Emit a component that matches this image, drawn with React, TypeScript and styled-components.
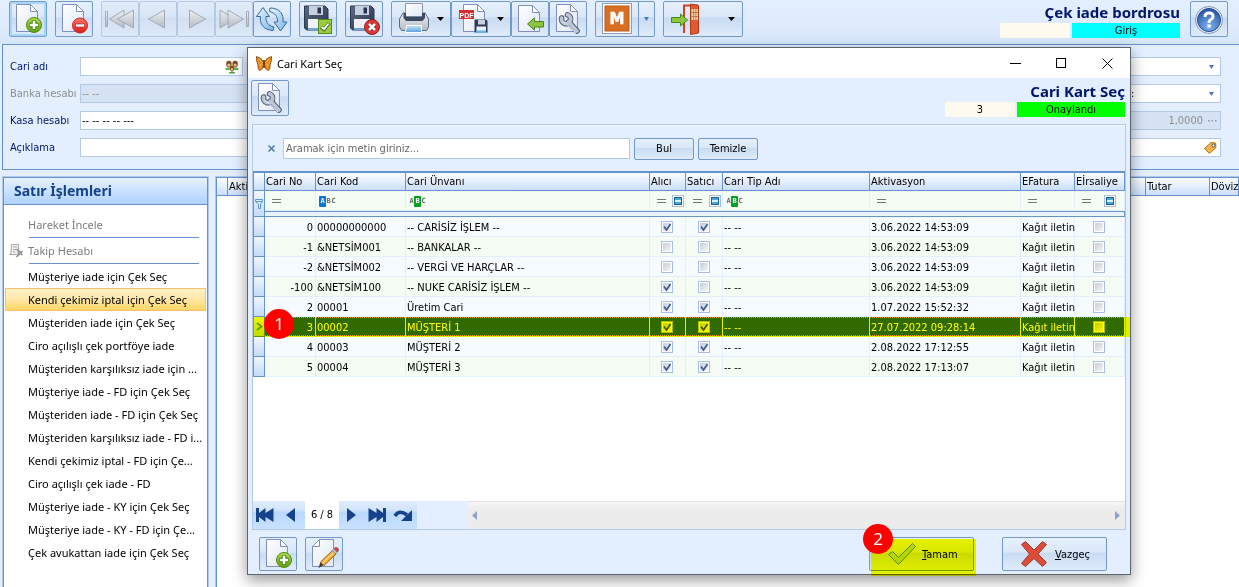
import React from "react";
import styled, { createGlobalStyle, css } from "styled-components";

const TAHOMA = `Tahoma, "DejaVu Sans Condensed", "DejaVu Sans", sans-serif`;
const SEGOE = `"Segoe UI", "Noto Sans", "Open Sans", sans-serif`;

const c = {
  bg: "#e3efff",
  line: "#6593cf",
  soft: "#b4c9e5",
  navy: "#00156e",
  cellLine: "#e3efff",
};

const Global = createGlobalStyle`
  *, *::before, *::after { box-sizing: border-box; }
  body { margin: 0; background: ${c.bg}; font-family: ${TAHOMA}; font-size: 11px; color: #000; overflow: hidden; }
  button, input, select { font: inherit; color: inherit; }
  svg { display: block; flex: none; }
`;

/* ---------- shell ---------- */

const Page = styled.div`
  position: relative;
  display: flex;
  flex-direction: column;
  height: 100vh;
  background: ${c.bg};
`;

const Toolbar = styled.header`
  display: flex;
  align-items: flex-start;
  gap: 8px;
  height: 44px;
  padding: 1px 11px 0 9px;
  background: linear-gradient(#e3efff, #deebfc 60%, #d6e6fa);
`;

const Group = styled.div`
  display: flex;
`;

const gloss = css`
  background: linear-gradient(#e6f0fc, #d9e7f7 45%, #c8dbf2 46%, #dfebfa);
`;

const ToolButton = styled.button<{ $w?: number; $h?: number; $active?: boolean; $dim?: boolean }>`
  display: flex;
  align-items: center;
  justify-content: space-between;
  width: ${(p) => p.$w ?? 38}px;
  height: ${(p) => p.$h ?? 36}px;
  padding: 0;
  border: 1px solid ${(p) => (p.$active ? "#6fa3d6" : p.$dim ? "#b5c9e4" : "#7399c9")};
  border-radius: 2px;
  overflow: hidden;
  ${gloss}
  ${(p) => p.$active && "box-shadow: inset 0 0 0 2px #a9d6f7;"}
  ${(p) => p.$dim && "background: linear-gradient(#e1ecfa, #d8e5f5 45%, #d0dff1 46%, #dde9f8);"}
`;

const SplitEnd = styled.span`
  display: flex;
  align-items: center;
  justify-content: center;
  align-self: stretch;
  width: 16px;
  border-left: 1px solid #7399c9;
`;

const CaretBox = styled.span`
  display: flex;
  justify-content: center;
  width: 21px;
`;

const FieldCaret = styled.span`
  display: flex;
  justify-content: center;
  width: 11px;
`;

const TitleBlock = styled.div<{ $end?: number }>`
  display: flex;
  flex-direction: column;
  align-items: flex-end;
  margin-left: auto;
  padding-right: ${(p) => p.$end ?? 0}px;
`;

const BigTitle = styled.h1`
  margin: 0;
  height: 22px;
  font: 700 15px/22px "Noto Sans", sans-serif;
  color: ${c.navy};
  white-space: nowrap;
`;

const StatusRow = styled.div`
  display: flex;
  gap: 2px;
`;

const Status = styled.span<{ $bg: string; $w: number }>`
  width: ${(p) => p.$w}px;
  height: 15px;
  line-height: 15px;
  text-align: center;
  background: ${(p) => p.$bg};
`;

/* ---------- form ---------- */

const FormPanel = styled.section`
  display: flex;
  justify-content: space-between;
  margin-left: 2px;
  padding: 12px 18px 12px 7px;
  border: solid ${c.line};
  border-width: 1px 0 1px 1px;
`;

const FieldCol = styled.div`
  display: grid;
  grid-template-columns: minmax(0, 1fr);
  gap: 8px;
  width: 300px;
`;

const RightCol = styled(FieldCol)`
  width: 92px;
`;

const FieldRow = styled.div`
  display: flex;
  align-items: center;
  height: 19px;
`;

const Label = styled.label<{ $muted?: boolean }>`
  width: 70px;
  flex: none;
  color: ${(p) => (p.$muted ? "#8d8d8d" : c.navy)};
  white-space: nowrap;
`;

const Field = styled.div<{ $w?: number; $muted?: boolean }>`
  display: flex;
  align-items: center;
  gap: 4px;
  flex: ${(p) => (p.$w ? "none" : 1)};
  width: ${(p) => (p.$w ? p.$w + "px" : "auto")};
  min-width: 0;
  height: 19px;
  padding: 0 3px 0 1px;
  border: 1px solid ${c.soft};
  background: ${(p) => (p.$muted ? "#d6e3f4" : "#fff")};
  color: ${(p) => (p.$muted ? "#8d8d8d" : "#000")};
`;

const FieldInput = styled.input<{ $right?: boolean }>`
  flex: 1;
  min-width: 0;
  padding: 0;
  border: 0;
  outline: 0;
  background: transparent;
  text-align: ${(p) => (p.$right ? "right" : "left")};
  &::placeholder { color: #666; opacity: 1; }
`;

/* ---------- lower area ---------- */

const Lower = styled.div`
  display: flex;
  gap: 8px;
  flex: 1;
  min-height: 0;
  padding: 7px 0 0 3px;
`;

const Sidebar = styled.nav`
  width: 205px;
  flex: none;
  background: #fff;
  border: solid ${c.line};
  border-width: 1px 1px 0;
  box-shadow: 0 0 0 1px ${c.soft};
  font-family: ${SEGOE};
`;

const SideTitle = styled.h2`
  margin: 0;
  height: 27px;
  padding-left: 10px;
  border-bottom: 1px solid ${c.line};
  background: linear-gradient(#e6f1ff, #afd2ff);
  font-size: 14px;
  line-height: 26px;
  color: #15428b;
`;

const SideList = styled.ul`
  margin: 0;
  padding: 8px 1px 0;
  list-style: none;
`;

const SideItem = styled.li<{ $line?: boolean }>`
  ${(p) =>
    p.$line &&
    css`
      padding-bottom: 1px;
      margin-bottom: 1px;
      background: linear-gradient(${c.line}, ${c.line}) 24px 100% / 170px 1px no-repeat;
      & > a { margin-bottom: 1px; }
    `}
`;

const SideLink = styled.a<{ $on?: boolean; $muted?: boolean }>`
  display: flex;
  align-items: center;
  height: 23px;
  border: 1px solid ${(p) => (p.$on ? "#ffbd69" : "transparent")};
  background: ${(p) => (p.$on ? "linear-gradient(#fff2c8, #ffe9ab 45%, #ffd767)" : "none")};
  color: ${(p) => (p.$muted ? "#7d7d7d" : "#000")};
  text-decoration: none;
  white-space: nowrap;
`;

const SideIcon = styled.span`
  display: flex;
  justify-content: flex-start;
  padding-left: 3px;
  width: 22px;
  flex: none;
`;

const Sheet = styled.main`
  flex: 1;
  background: #fff;
  border: solid ${c.line};
  border-width: 1px 0 0 1px;
  box-shadow: 0 0 0 1px ${c.soft};
`;

const headGradient = "linear-gradient(#f9fcff, #e4eefc 50%, #cadefa)";

const SheetTable = styled.table`
  width: 100%;
  table-layout: fixed;
  border-collapse: separate;
  border-spacing: 0;
  th {
    height: 18px;
    padding: 0 0 0 1px;
    border: solid ${c.line};
    border-width: 0 1px 1px 0;
    background: ${headGradient};
    font-weight: 400;
    text-align: left;
    white-space: nowrap;
    overflow: hidden;
  }
`;

/* ---------- dialog ---------- */

const Dialog = styled.section`
  position: absolute;
  top: 47px;
  right: 108px;
  bottom: 12px;
  left: 247px;
  display: flex;
  flex-direction: column;
  border: 1px solid #5c6470;
  background: ${c.bg};
  box-shadow: 0 5px 14px rgba(0, 0, 0, 0.42);
`;

const TitleBar = styled.div`
  display: flex;
  align-items: center;
  flex: none;
  height: 30px;
  padding-left: 8px;
  gap: 5px;
  background: #fff;
  font: 11px ${SEGOE};
`;

const WindowButtons = styled.div`
  display: flex;
  margin-left: auto;
`;

const WindowButton = styled.button`
  display: flex;
  align-items: center;
  justify-content: center;
  width: 46px;
  height: 30px;
  padding: 0;
  border: 0;
  background: none;
`;

const DialogTop = styled.div`
  display: flex;
  flex: none;
  height: 46px;
  padding: 2px 5px 0 3px;
`;

const Pane = styled.div`
  display: flex;
  flex-direction: column;
  flex: 1;
  min-height: 0;
  margin: 0 4px;
  border: 1px solid ${c.soft};
`;

const SearchRow = styled.div`
  display: flex;
  align-items: center;
  flex: none;
  gap: 4px;
  height: 46px;
  padding-left: 13px;
  border-top: 1px solid #f4f9ff;
`;

const ClearButton = styled.button`
  display: flex;
  justify-content: center;
  width: 13px;
  padding: 0 2px 0 0;
  border: 0;
  background: none;
`;

const SearchInput = styled(FieldInput)`
  flex: 0 1 347px;
  height: 21px;
  padding: 0 2px;
  border: 1px solid ${c.soft};
  background: #fff;
`;

const TextButton = styled.button`
  width: 60px;
  height: 22px;
  padding: 0;
  border: 1px solid #7399c9;
  border-radius: 2px;
  ${gloss}
`;

const Grid = styled.table`
  width: 100%;
  table-layout: fixed;
  border-collapse: separate;
  border-spacing: 0;
  border-top: 2px solid ${c.line};
  border-left: 1px solid ${c.line};
`;

const HeadCell = styled.th`
  height: 18px;
  padding: 0 0 0 1px;
  border: solid ${c.line};
  border-width: 0 1px 1px 0;
  background: ${headGradient};
  font-weight: 400;
  text-align: left;
  white-space: nowrap;
`;

const Cell = styled.td<{ $align?: string }>`
  height: 20px;
  padding: 1px ${(p) => (p.$align ? 2 : 0)}px 0 1px;
  border: solid ${c.cellLine};
  border-width: 0 1px 1px 0;
  text-align: ${(p) => p.$align ?? "left"};
  white-space: nowrap;
`;

const MarkCell = styled.td`
  padding: 0;
  border: solid ${c.line};
  border-width: 0 1px 1px 0;
  background: linear-gradient(#f0f6ff, #c4dbfb);
  svg { margin: 0 auto; }
`;

const FilterRow = styled.tr`
  background: #f5fcf4;
`;

const FilterBox = styled.div<{ $start?: number; $end?: number }>`
  display: flex;
  align-items: center;
  justify-content: space-between;
  height: 18px;
  padding: 0 ${(p) => p.$end ?? 1}px 0 ${(p) => p.$start ?? 6}px;
`;

const SpacerCell = styled.td`
  height: 6px;
  padding: 0;
  border: solid ${c.line};
  border-width: 1px 1px 1px 0;
  background: #eaf3ff;
`;

const Row = styled.tr<{ $even?: boolean; $selected?: boolean }>`
  background: ${(p) => (p.$even ? "#f5fcf4" : "#f6fbff")};
  ${(p) =>
    p.$selected &&
    css`
      position: relative;
      color: #fff;
      ${Cell} {
        background:
          repeating-linear-gradient(90deg, #e8a03c 0 1px, #316ac5 1px 2px) 0 0 / 100% 1px no-repeat,
          repeating-linear-gradient(90deg, #e8a03c 0 1px, #316ac5 1px 2px) 0 100% / 100% 1px no-repeat,
          #316ac5;
      }
      ${MarkCell}::after {
        content: "";
        position: absolute;
        inset: 0 -5px 0 0;
        z-index: 1;
        background: #ff0;
        mix-blend-mode: multiply;
        pointer-events: none;
      }
    `}
`;

const CheckWrap = styled.span`
  display: grid;
  grid-template-columns: 12px;
  justify-content: center;
  height: 12px;
  padding-right: 2px;
  & > * { grid-area: 1 / 1; }
  & > svg { pointer-events: none; }
`;

const CheckInput = styled.input`
  appearance: none;
  width: 12px;
  height: 12px;
  margin: 0;
  padding: 1px;
  border: 1px solid #a9bfe0;
  background: linear-gradient(135deg, #c5cbd6, #f6f7f9) content-box, #fff;
`;

const AbcTag = styled.span`
  display: flex;
  font: 700 7px/11px "DejaVu Sans Mono", monospace;
  color: #777;
`;

const AbcLetter = styled.span<{ $bg?: string }>`
  width: ${(p) => (p.$bg ? 7 : 5)}px;
  height: 11px;
  text-align: center;
  color: ${(p) => (p.$bg ? "#fff" : "#666")};
  background: ${(p) => p.$bg ?? "none"};
  border-radius: 1px;
`;

const Blank = styled.div`
  flex: 1;
  background: #fff;
`;

const Navigator = styled.div`
  display: flex;
  flex: none;
  height: 28px;
`;

const NavButton = styled.button`
  display: flex;
  align-items: center;
  justify-content: center;
  width: 26px;
  padding: 0 2px 0 0;
  border: 0;
  background: linear-gradient(#dfecfd, #d0e3fc 37%, #b9d7fe 38%, #c9e1ff);
`;

const NavCount = styled.span`
  width: 34px;
  line-height: 28px;
  text-align: center;
  background: #fff;
`;

const Scroll = styled.div`
  display: flex;
  align-items: center;
  justify-content: space-between;
  flex: 1;
  margin-left: 50px;
  padding: 0 5px;
  border-top: 1px solid #e3e3e3;
  background: linear-gradient(#f5f5f5, #ececec 30%);
`;

const Footer = styled.footer`
  display: flex;
  flex: none;
  gap: 8px;
  height: 44px;
  padding: 7px 23px 0 11px;
`;

const Actions = styled.div`
  display: flex;
  gap: 28px;
  margin-left: auto;
`;

const ActionButton = styled.button`
  display: flex;
  align-items: center;
  gap: 5px;
  width: 105px;
  height: 34px;
  padding: 0 0 0 17px;
  border: 1px solid #7399c9;
  border-radius: 2px;
  ${gloss}
`;

const Marked = styled.div`
  position: relative;
  &::after {
    content: "";
    position: absolute;
    inset: 2px -2px -2px 2px;
    background: #ff0;
    mix-blend-mode: multiply;
    pointer-events: none;
  }
`;

const Step = styled.span<{ $x: number; $y: number }>`
  position: absolute;
  left: ${(p) => p.$x}px;
  top: ${(p) => p.$y}px;
  z-index: 2;
  width: 30px;
  height: 30px;
  border-radius: 50%;
  background: #f00;
  color: #fff;
  font: 17px/29px ${SEGOE};
  text-align: center;
`;

/* ---------- icons ---------- */

const Svg = ({ w = 36, h = 34, children }: { w?: number; h?: number; children: React.ReactNode }) => (
  <svg width={w} height={h} viewBox={`0 0 ${w} ${h}`} fill="none" aria-hidden="true">
    {children}
  </svg>
);

const DefsSvg = styled.svg`
  position: absolute;
`;

const Defs = () => (
  <DefsSvg width="0" height="0" aria-hidden="true">
    <defs>
      <linearGradient id="paper" x1="0" y1="0" x2="1" y2="1">
        <stop offset="0" stopColor="#ffffff" /><stop offset="1" stopColor="#dfe6f5" />
      </linearGradient>
      <linearGradient id="green" x1="0" y1="0" x2="0" y2="1">
        <stop offset="0" stopColor="#b5e04e" /><stop offset="1" stopColor="#5fa010" />
      </linearGradient>
      <linearGradient id="red" x1="0" y1="0" x2="0" y2="1">
        <stop offset="0" stopColor="#ff7a70" /><stop offset="1" stopColor="#d81c1c" />
      </linearGradient>
      <linearGradient id="sky" x1="0" y1="0" x2="0" y2="1">
        <stop offset="0" stopColor="#c5e6fa" /><stop offset="1" stopColor="#5b9fd8" />
      </linearGradient>
      <linearGradient id="ice" x1="0" y1="0" x2="1" y2="1">
        <stop offset="0" stopColor="#e6f5fe" /><stop offset="1" stopColor="#7db6e4" />
      </linearGradient>
      <linearGradient id="dark" x1="0" y1="0" x2="1" y2="1">
        <stop offset="0" stopColor="#5d6b80" /><stop offset="1" stopColor="#27344c" />
      </linearGradient>
      <linearGradient id="grey" x1="0" y1="0" x2="0" y2="1">
        <stop offset="0" stopColor="#eef0f3" /><stop offset="1" stopColor="#b4bac4" />
      </linearGradient>
      <radialGradient id="help" cx=".5" cy=".8" r=".8">
        <stop offset="0" stopColor="#7fb4ec" /><stop offset="1" stopColor="#2453a5" />
      </radialGradient>
    </defs>
  </DefsSvg>
);

const Paper = () => (
  <>
    <path d="M6.500 2.500H20.500L27.500 9.500V29.500H6.500Z" fill="url(#paper)" stroke="#7f8fbe" />
    <path d="M20.500 2.500V9.500H27.500Z" fill="#fff" stroke="#7f8fbe" />
  </>
);

const AddIcon = () => (
  <Svg><Paper />
    <circle cx="24" cy="23" r="7.500" fill="url(#green)" stroke="#4d8a12" />
    <path d="M24 18.500V27.500M19.500 23H28.500" stroke="#3f7a0c" strokeWidth="4.600" />
    <path d="M24 19V27M20 23H28" stroke="#fff" strokeWidth="2.600" />
  </Svg>
);

const RemoveIcon = () => (
  <Svg><Paper />
    <circle cx="24" cy="23.500" r="7.500" fill="url(#red)" stroke="#cf2222" />
    <rect x="19.500" y="22" width="9" height="3" fill="#fff" stroke="#b01616" strokeWidth=".6" />
  </Svg>
);

const wrenchPath = "M11.600 16A4.600 4.600 0 1 0 17.500 12.800M18.500 20L27 29";

const WrenchIcon = () => (
  <Svg><Paper />
    <path d={wrenchPath} stroke="#4f5d78" strokeWidth="5.600" strokeLinecap="round" />
    <path d={wrenchPath} stroke="#bcc6d6" strokeWidth="3.600" strokeLinecap="round" />
    <path d="M12.500 19.500L16 21.500L26 31" stroke="#e6ebf3" />
  </Svg>
);

const PencilIcon = () => (
  <Svg>
    <path d="M13.500 2.500H27.500V29.500H6.500V9.500Z" fill="url(#paper)" stroke="#7f8fbe" />
    <path d="M13.500 2.500V9.500H6.500Z" fill="#fff" stroke="#7f8fbe" />
    <path d="M12.500 31L14.500 25L18 28Z" fill="#3a3a3a" />
    <path d="M14.500 25L26.500 13.500L30 17L18 28.500Z" fill="#f5b342" stroke="#9a5a14" />
    <path d="M16 26.500L28 15" stroke="#ffe29a" />
    <path d="M26 13.500L28 11.500L31.500 15L29.500 17Z" fill="#b9c4d6" stroke="#68748c" strokeWidth=".6" />
    <path d="M28 11.500L29.500 10.500Q32.500 10 32.500 13.500L31.500 15Z" fill="#d34545" stroke="#9d2727" strokeWidth=".6" />
  </Svg>
);

const ImportIcon = () => (
  <Svg>
    <path d="M6.500 3.500H20.500L27.500 10.500V29.500H6.500Z" fill="url(#paper)" stroke="#7f8fbe" />
    <path d="M20.500 3.500V10.500H27.500Z" fill="#fff" stroke="#7f8fbe" />
    <path d="M15.500 22L22.500 16V19.500H31.500V25H22.500V28Z" fill="#8cc63f" stroke="#4a861a" />
  </Svg>
);

const navFill = { fill: "url(#grey)", stroke: "#a3aab5", strokeWidth: 1 };
const GreyFirst = () => <Svg><path d="M3.500 9.500V24.500H5.500V9.500Z" {...navFill} /><path d="M22 8V26L7.500 17Z" {...navFill} /><path d="M31.500 8V26L15.500 17Z" {...navFill} /></Svg>;
const GreyPrev = () => <Svg><path d="M24.500 8V26L8.500 17Z" {...navFill} /></Svg>;
const GreyNext = () => <Svg><path d="M11.500 8V26L27.500 17Z" {...navFill} /></Svg>;
const GreyLast = () => <Svg><path d="M4 8V26L18.500 17Z" {...navFill} /><path d="M12 8V26L27.500 17Z" {...navFill} /><path d="M30.500 9.500V24.500H32.500V9.500Z" {...navFill} /></Svg>;

const RefreshIcon = () => (
  <Svg>
    <path d="M9 5.500L15.500 14.500H12C11.500 20 14 23.500 20 25L19 28.500C9.500 28 5.500 22 6.500 14.500H2.500Z" fill="url(#ice)" stroke="#35699f" />
    <path d="M26.500 29L20 20H23.500C24 14.500 21 11 15.500 9.500L16 6C25.500 6 30 12 29 20H33Z" fill="url(#ice)" stroke="#35699f" />
  </Svg>
);

const FloppyShape = () => (
  <>
    <path d="M4.500 4H25L28 7V28H6.500L4.500 26Z" fill="url(#dark)" stroke="#2a3a54" />
    <rect x="9" y="4" width="14" height="9" fill="#c6d0de" />
    <rect x="17.500" y="5.500" width="3.500" height="6" fill="#27344c" />
    <rect x="8" y="17" width="16" height="11" fill="#eef2f8" />
    <path d="M8 26H24V28H8Z" fill="#6fa5dc" />
  </>
);

const SaveOkIcon = () => (
  <Svg><FloppyShape />
    <rect x="18.500" y="17.500" width="13" height="14" fill="#9acb40" stroke="#4f8a1b" />
    <path d="M21 25L24 27.500L29 21" stroke="#4d7a20" strokeWidth="3.600" />
    <path d="M21.500 25L24 27L28.500 21.500" stroke="#fff" strokeWidth="1.800" />
  </Svg>
);

const SaveCloseIcon = () => (
  <Svg><FloppyShape />
    <circle cx="26" cy="25" r="7.500" fill="#d83a3a" stroke="#8f1a1a" />
    <path d="M23 22L29 28M29 22L23 28" stroke="#8f1a1a" strokeWidth="4.400" />
    <path d="M23 22L29 28M29 22L23 28" stroke="#fff" strokeWidth="2.600" />
  </Svg>
);

const PrinterIcon = () => (
  <Svg w={38}>
    <path d="M11 11L7.500 17V25L9.500 28.500H34.500L36.500 25V17L33 11Z" fill="url(#grey)" stroke="#5c6a86" />
    <path d="M13.500 1.500H30.500V15H13.500Z" fill="url(#paper)" stroke="#8b96ad" />
    <path d="M11.500 11H14V14.500H30V11H33V16L30.500 19H14L11.500 16Z" fill="#3c4963" />
    <path d="M14.500 23.500H29.500V30.500H13.500Z" fill="url(#sky)" stroke="#fff" />
  </Svg>
);

const PdfIcon = () => (
  <Svg w={38}>
    <path d="M11.500 2.500H25.500L32.500 9.500V29.500H11.500Z" fill="url(#paper)" stroke="#7f8fbe" />
    <path d="M25.500 2.500V9.500H32.500Z" fill="#fff" stroke="#7f8fbe" />
    <rect x="7" y="8" width="15" height="9" fill="#d42e2e" />
    <text x="14.500" y="15.500" fill="#fff" fontSize="7" fontWeight="700" textAnchor="middle" fontFamily="Liberation Sans, sans-serif">PDF</text>
    <path d="M22.500 17.500H34L35.500 19V30.500H22.500Z" fill="#2d3b54" />
    <rect x="26" y="18" width="7" height="4.500" fill="#c6d0de" />
    <rect x="24.500" y="24.500" width="9.500" height="6" fill="#e8f2fc" />
    <rect x="24.500" y="28.500" width="9.500" height="2.500" fill="#69b0e6" />
  </Svg>
);

const MIcon = () => (
  <Svg w={42}>
    <rect x="6.500" y="1.500" width="29" height="30" fill="#fff" stroke="#8f9bb3" />
    <rect x="9" y="4" width="24" height="25" fill="#d86f22" stroke="#b85a16" />
    <text x="21" y="22" fill="#fff" stroke="#fff" strokeWidth=".6" fontSize="15" fontWeight="700" textAnchor="middle" fontFamily="DejaVu Sans, sans-serif">M</text>
  </Svg>
);

const DoorIcon = () => (
  <Svg w={40}>
    <path d="M20 31V3.500H34" stroke="#c8442a" strokeWidth="2" />
    <path d="M26.500 2L34.500 3.500V31L26.500 32.500Z" fill="#df5a2e" stroke="#b23c1a" />
    <rect x="27.500" y="7" width="6.500" height="11" fill="#f3d7a8" />
    <path d="M29.700 7V18M31.900 7V18M27.500 10.500H34M27.500 14.500H34" stroke="#b06a3c" strokeWidth=".8" />
    <path d="M23.500 18L16.500 12V15.500H7.500V20.500H16.500V24Z" fill="#8cc63f" stroke="#4a861a" />
  </Svg>
);

const HelpIcon = () => (
  <Svg>
    <circle cx="18" cy="18" r="13.500" fill="#e8eef8" stroke="#8297bb" />
    <circle cx="18" cy="18" r="11.500" fill="url(#help)" stroke="#20498f" />
    <path d="M14 15Q14 11 18 11T22 14.500Q22 16.500 20 17.500T18 21" stroke="#fff" strokeWidth="3" />
    <rect x="16.500" y="22.500" width="3.200" height="3" fill="#fff" />
  </Svg>
);

const Caret = ({ color = "#000", w = 7 }: { color?: string; w?: number }) => (
  <Svg w={w} h={4}><path d={`M0 0H${w}L${w / 2} 4Z`} fill={color} /></Svg>
);

const PeopleIcon = () => (
  <Svg w={14} h={14}>
    <path d="M4 12.500Q7 10.500 10 12.500V13.500H4Z" fill="#4f9a3a" />
    <path d="M.5 8.500Q3.500 6.500 6.500 9V10H.5ZM7.500 9Q10.500 6.500 13.500 8.500V10H7.500Z" fill="#5fae45" />
    <ellipse cx="3.900" cy="4" rx="2.700" ry="3.200" fill="#7c4a1e" /><ellipse cx="10.100" cy="4" rx="2.700" ry="3.200" fill="#7c4a1e" />
    <circle cx="3.900" cy="5" r="1.500" fill="#f0c08a" /><circle cx="10.100" cy="5" r="1.500" fill="#f0c08a" />
    <ellipse cx="7" cy="8.500" rx="2.100" ry="2.800" fill="#7c4a1e" /><circle cx="7" cy="9.300" r="1.300" fill="#f0c08a" />
  </Svg>
);

const TagIcon = () => (
  <Svg w={13} h={12}>
    <path d="M.5 6.500L7 .5L11.500 1L12 5.500L5.500 11.500Z" fill="#f2b34c" stroke="#b57317" />
    <circle cx="9.500" cy="3.500" r="1.500" fill="#fff" stroke="#555" />
  </Svg>
);

const Dots = () => (
  <Svg w={10} h={2}><path d="M1 0H2.500V1.500H1ZM4.500 0H6V1.500H4.500ZM8 0H9.500V1.500H8Z" fill="#8a99b5" /></Svg>
);

const TaskIcon = () => (
  <Svg w={15} h={14}>
    <path d="M2.500 .5H9.500V10.500H.5L2 9Z" fill="#f0f0f0" stroke="#aaa" />
    <path d="M4 3H8M4 5.500H7M4 8H6" stroke="#aaa" />
    <path d="M7.500 5L13.500 11M13.500 7L7.500 13" stroke="#8f8f8f" strokeWidth="1.600" />
    <circle cx="10.500" cy="8.500" r="2" fill="#999" />
  </Svg>
);

const ButterflyIcon = () => (
  <Svg w={16} h={15}>
    <path d="M.5 .5Q6 1.500 7.500 6.500L7 10Q6.500 14 3.500 14.500Q1.500 13 2 9Q0 5 .5 .5Z" fill="#ef8f1c" stroke="#7d420a" strokeWidth=".8" />
    <path d="M15.500 .5Q10 1.500 8.500 6.500L9 10Q9.500 14 12.500 14.500Q14.500 13 14 9Q16 5 15.500 .5Z" fill="#ef8f1c" stroke="#7d420a" strokeWidth=".8" />
    <path d="M3 3L7 7M13 3L9 7M3.500 9H7M12.500 9H9" stroke="#ffc04d" strokeWidth=".8" />
    <path d="M8 4V12" stroke="#4a2a0c" strokeWidth="1.500" />
  </Svg>
);

const FunnelIcon = () => (
  <Svg w={9} h={12}><path d="M.5 1.500H7.500V3.500L5.500 6V10.500H3.500V6L.5 3.500ZM.5 3.500H7.500" fill="#e3efff" stroke="#5f95d6" /></Svg>
);

const Equals = () => <Svg w={9} h={4}><path d="M0 .5H9M0 3.500H9" stroke="#777" /></Svg>;

const StateBox = () => (
  <Svg w={12} h={12}>
    <rect x=".5" y=".5" width="11" height="11" fill="#fff" stroke="#a9bfe0" />
    <rect x="2.500" y="2.500" width="7" height="7" fill="#4aa8dc" stroke="#1c5c92" />
    <rect x="3" y="5" width="6" height="2" fill="#d5f0ff" />
  </Svg>
);

const blue = "#15428b";
const NavFirst = () => <Svg w={20} h={16}><path d="M1 1H4V6L10.500 1V6L18.500 1V15L10.500 10V15L4 10V15H1Z" fill={blue} /></Svg>;
const NavPrev = () => <Svg w={10} h={14}><path d="M9 0V14L0 7Z" fill={blue} /></Svg>;
const NavNext = () => <Svg w={10} h={14}><path d="M1 0V14L10 7Z" fill={blue} /></Svg>;
const NavLast = () => <Svg w={20} h={16}><path d="M19 1H16V6L9.500 1V6L1.500 1V15L9.500 10V15L16 10V15H19Z" fill={blue} /></Svg>;
const NavJump = () => <Svg w={20} h={14}><path d="M2 8Q6 1 14 7" stroke={blue} strokeWidth="3.600" /><path d="M19 2V13H8Z" fill={blue} /></Svg>;

const CheckIcon = () => (
  <Svg w={30} h={24}><path d="M1.500 12.500L5.500 9.500L11.500 15.500L25.500 1.500L28.500 4.500L11.500 22.500Z" fill="#b6d65a" stroke="#55851f" /></Svg>
);

const CrossIcon = () => (
  <Svg w={30} h={28}>
    <path d="M1.500 4.500L5.500 1.500L14 10L22.500 1.500L26.500 4.500L18 14L26.500 22.500L22.500 26.500L14 18.500L5.500 26.500L1.500 23.500L9.500 14Z" fill="#dd4b39" stroke="#9c3a30" />
  </Svg>
);

/* ---------- pieces ---------- */

const Check = ({ on, label }: { on: boolean; label: string }) => (
  <CheckWrap>
    <CheckInput type="checkbox" checked={on} readOnly aria-label={label} />
    {on && <Svg w={12} h={12}><path d="M3 5.500L5.500 9L9.500 3" stroke="#3f5f96" strokeWidth="1.800" /></Svg>}
  </CheckWrap>
);

const Abc = ({ mark }: { mark: "A" | "B" }) => (
  <AbcTag>
    {["A", "B", "C"].map((l) => (
      <AbcLetter key={l} $bg={l === mark ? (mark === "A" ? "#0b73d6" : "#00a020") : undefined}>{l}</AbcLetter>
    ))}
  </AbcTag>
);

const sideItems = [
  "Müşteriye iade için Çek Seç",
  "Kendi çekimiz iptal için Çek Seç",
  "Müşteriden iade için Çek Seç",
  "Ciro açılışlı çek portföye iade",
  "Müşteriden karşılıksız iade için ...",
  "Müşteriye iade - FD için Çek Seç",
  "Müşteriden iade - FD için Çek Seç",
  "Müşteriden karşılıksız iade - FD i...",
  "Kendi çekimiz iptal - FD için Çe...",
  "Ciro açılışlı çek iade - FD",
  "Müşteriye iade - KY için Çek Seç",
  "Müşteriye iade - KY - FD için Çe...",
  "Çek avukattan iade için Çek Seç",
];

type Card = [string, string, string, boolean, boolean, string];
const cards: Card[] = [
  ["0", "00000000000", "-- CARİSİZ İŞLEM --", true, true, "3.06.2022 14:53:09"],
  ["-1", "&NETSİM001", "-- BANKALAR --", false, false, "3.06.2022 14:53:09"],
  ["-2", "&NETSİM002", "-- VERGİ VE HARÇLAR --", false, false, "3.06.2022 14:53:09"],
  ["-100", "&NETSİM100", "-- NUKE CARİSİZ İŞLEM --", true, false, "3.06.2022 14:53:09"],
  ["2", "00001", "Üretim Cari", true, true, "1.07.2022 15:52:32"],
  ["3", "00002", "MÜŞTERİ 1", true, true, "27.07.2022 09:28:14"],
  ["4", "00003", "MÜŞTERİ 2", true, true, "2.08.2022 17:12:55"],
  ["5", "00004", "MÜŞTERİ 3", true, true, "2.08.2022 17:13:07"],
];

const columns: [string, number | undefined][] = [
  ["", 11], ["Cari No", 51], ["Cari Kod", 90], ["Cari Ünvanı", undefined], ["Alıcı", 36],
  ["Satıcı", 37], ["Cari Tip Adı", 147], ["Aktivasyon", 151], ["EFatura", 54], ["Eİrsaliye", 50],
];

const CardGrid = () => (
  <Grid>
    <colgroup>{columns.map(([n, w]) => <col key={n} width={w} />)}</colgroup>
    <thead>
      <tr>{columns.map(([n]) => <HeadCell key={n} scope="col">{n}</HeadCell>)}</tr>
    </thead>
    <tbody>
      <FilterRow>
        <MarkCell rowSpan={2}><FunnelIcon /></MarkCell>
        <Cell><FilterBox><Equals /></FilterBox></Cell>
        <Cell><FilterBox $start={2}><Abc mark="A" /></FilterBox></Cell>
        <Cell><FilterBox $start={2}><Abc mark="B" /></FilterBox></Cell>
        <Cell><FilterBox><Equals /><StateBox /></FilterBox></Cell>
        <Cell><FilterBox><Equals /><StateBox /></FilterBox></Cell>
        <Cell><FilterBox $start={2}><Abc mark="B" /></FilterBox></Cell>
        <Cell><FilterBox><Equals /></FilterBox></Cell>
        <Cell><FilterBox><Equals /></FilterBox></Cell>
        <Cell><FilterBox $end={8}><Equals /><StateBox /></FilterBox></Cell>
      </FilterRow>
      <tr><SpacerCell colSpan={9} /></tr>
      {cards.map(([no, code, name, buyer, seller, date], i) => (
        <Row key={no} $even={i % 2 === 1} $selected={no === "3"}>
          <MarkCell>
            {no === "3" && <Svg w={7} h={9}><path d="M1 1L5.500 4.500L1 8" stroke="#5c9a5c" strokeWidth="1.800" /></Svg>}
          </MarkCell>
          <Cell $align="right">{no}</Cell>
          <Cell>{code}</Cell>
          <Cell>{name}</Cell>
          <Cell><Check on={buyer} label={`${name} Alıcı`} /></Cell>
          <Cell><Check on={seller} label={`${name} Satıcı`} /></Cell>
          <Cell>-- --</Cell>
          <Cell>{date}</Cell>
          <Cell>Kağıt iletin</Cell>
          <Cell><Check on={false} label={`${name} Eİrsaliye`} /></Cell>
        </Row>
      ))}
    </tbody>
  </Grid>
);

const CardDialog = () => (
  <Dialog role="dialog" aria-label="Cari Kart Seç">
    <TitleBar>
      <ButterflyIcon />
      <span>Cari Kart Seç</span>
      <WindowButtons>
        <WindowButton aria-label="Minimize"><Svg w={11} h={11}><path d="M0 5.500H11" stroke="#000" /></Svg></WindowButton>
        <WindowButton aria-label="Maximize"><Svg w={10} h={10}><rect x=".5" y=".5" width="9" height="9" stroke="#000" /></Svg></WindowButton>
        <WindowButton aria-label="Close"><Svg w={11} h={11}><path d="M.5 .5L10.500 10.500M10.500 .5L.5 10.500" stroke="#000" /></Svg></WindowButton>
      </WindowButtons>
    </TitleBar>
    <DialogTop>
      <ToolButton aria-label="Ayarlar"><WrenchIcon /></ToolButton>
      <TitleBlock>
        <BigTitle as="h2">Cari Kart Seç</BigTitle>
        <StatusRow><Status $w={70} $bg="#fffaf0">3</Status><Status $w={108} $bg="#0f0">Onaylandı</Status></StatusRow>
      </TitleBlock>
    </DialogTop>
    <Pane>
      <SearchRow>
        <ClearButton aria-label="Kapat"><Svg w={7} h={7}><path d="M.5 .5L6.500 6.500M6.500 .5L.5 6.500" stroke="#4a78b8" strokeWidth="1.500" /></Svg></ClearButton>
        <SearchInput placeholder="Aramak için metin giriniz..." aria-label="Ara" />
        <TextButton>Bul</TextButton>
        <TextButton>Temizle</TextButton>
      </SearchRow>
      <CardGrid />
      <Blank />
      <Navigator>
        <NavButton aria-label="İlk"><NavFirst /></NavButton>
        <NavButton aria-label="Önceki"><NavPrev /></NavButton>
        <NavCount>6 / 8</NavCount>
        <NavButton aria-label="Sonraki"><NavNext /></NavButton>
        <NavButton aria-label="Son"><NavLast /></NavButton>
        <NavButton aria-label="Git"><NavJump /></NavButton>
        <Scroll>
          <Svg w={5} h={9}><path d="M5 0V9L0 4.500Z" fill="#8fa3cc" /></Svg>
          <Svg w={5} h={9}><path d="M0 0V9L5 4.500Z" fill="#8fa3cc" /></Svg>
        </Scroll>
      </Navigator>
    </Pane>
    <Footer>
      <ToolButton $h={34} aria-label="Yeni"><AddIcon /></ToolButton>
      <ToolButton $h={34} aria-label="Düzenle"><PencilIcon /></ToolButton>
      <Actions>
        <Marked>
          <ActionButton><CheckIcon /><span><u>T</u>amam</span></ActionButton>
          <Step $x={-6} $y={-13}>2</Step>
        </Marked>
        <ActionButton><CrossIcon /><span><u>V</u>azgeç</span></ActionButton>
      </Actions>
    </Footer>
    <Step $x={16} $y={261}>1</Step>
  </Dialog>
);

export default function App() {
  return (
    <Page>
      <Global />
      <Defs />
      <Toolbar>
        <Group><ToolButton $active aria-label="Yeni"><AddIcon /></ToolButton></Group>
        <Group><ToolButton aria-label="Sil"><RemoveIcon /></ToolButton></Group>
        <Group>
          <ToolButton $dim aria-label="İlk kayıt"><GreyFirst /></ToolButton>
          <ToolButton $dim aria-label="Önceki kayıt"><GreyPrev /></ToolButton>
          <ToolButton $dim aria-label="Sonraki kayıt"><GreyNext /></ToolButton>
          <ToolButton $dim aria-label="Son kayıt"><GreyLast /></ToolButton>
          <ToolButton aria-label="Yenile"><RefreshIcon /></ToolButton>
        </Group>
        <Group><ToolButton aria-label="Kaydet"><SaveOkIcon /></ToolButton></Group>
        <Group><ToolButton aria-label="Kaydet ve kapat"><SaveCloseIcon /></ToolButton></Group>
        <Group>
          <ToolButton $w={60} aria-label="Yazdır"><PrinterIcon /><CaretBox><Caret /></CaretBox></ToolButton>
          <ToolButton $w={60} aria-label="PDF"><PdfIcon /><CaretBox><Caret /></CaretBox></ToolButton>
          <ToolButton aria-label="Aktar"><ImportIcon /></ToolButton>
          <ToolButton aria-label="Ayarlar"><WrenchIcon /></ToolButton>
        </Group>
        <Group><ToolButton $w={60} aria-label="Modül"><MIcon /><SplitEnd><Caret w={5} color="#4a78b8" /></SplitEnd></ToolButton></Group>
        <Group><ToolButton $w={80} aria-label="Çıkış"><DoorIcon /><CaretBox><Caret /></CaretBox></ToolButton></Group>
        <TitleBlock $end={2}>
          <BigTitle>Çek iade bordrosu</BigTitle>
          <StatusRow><Status $w={70} $bg="#fffaf0" /><Status $w={108} $bg="#0ff">Giriş</Status></StatusRow>
        </TitleBlock>
        <ToolButton aria-label="Yardım"><HelpIcon /></ToolButton>
      </Toolbar>

      <FormPanel>
        <FieldCol>
          <FieldRow><Label htmlFor="cari">Cari adı</Label><Field $w={163}><FieldInput id="cari" /><PeopleIcon /></Field></FieldRow>
          <FieldRow><Label $muted htmlFor="banka">Banka hesabı</Label><Field $muted><FieldInput id="banka" defaultValue="-- --" disabled /></Field></FieldRow>
          <FieldRow><Label htmlFor="kasa">Kasa hesabı</Label><Field><FieldInput id="kasa" defaultValue="-- -- -- -- ---" /></Field></FieldRow>
          <FieldRow><Label htmlFor="aciklama">Açıklama</Label><Field><FieldInput id="aciklama" /></Field></FieldRow>
        </FieldCol>
        <RightCol>
          <FieldRow><Field><FieldInput aria-label="Tür" /><FieldCaret><Caret w={5} color="#4a78b8" /></FieldCaret></Field></FieldRow>
          <FieldRow><Field><FieldInput aria-label="Döviz" defaultValue=":" /><FieldCaret><Caret w={5} color="#4a78b8" /></FieldCaret></Field></FieldRow>
          <FieldRow><Field $muted><FieldInput $right aria-label="Kur" defaultValue="1,0000" disabled /><Dots /></Field></FieldRow>
          <FieldRow><Field><FieldInput aria-label="Etiket" /><TagIcon /></Field></FieldRow>
        </RightCol>
      </FormPanel>

      <Lower>
        <Sidebar>
          <SideTitle>Satır İşlemleri</SideTitle>
          <SideList>
            <SideItem $line><SideLink $muted href="#"><SideIcon />Hareket İncele</SideLink></SideItem>
            <SideItem $line><SideLink $muted href="#"><SideIcon><TaskIcon /></SideIcon>Takip Hesabı</SideLink></SideItem>
            {sideItems.map((t, i) => (
              <SideItem key={t}><SideLink $on={i === 1} href="#"><SideIcon />{t}</SideLink></SideItem>
            ))}
          </SideList>
        </Sidebar>
        <Sheet>
          <SheetTable>
            <colgroup><col width={11} /><col /><col width={64} /><col width={29} /></colgroup>
            <thead><tr><th aria-label="Seçim" /><th scope="col">Aktif</th><th scope="col">Tutar</th><th scope="col">Döviz</th></tr></thead>
          </SheetTable>
        </Sheet>
      </Lower>

      <CardDialog />
    </Page>
  );
}
